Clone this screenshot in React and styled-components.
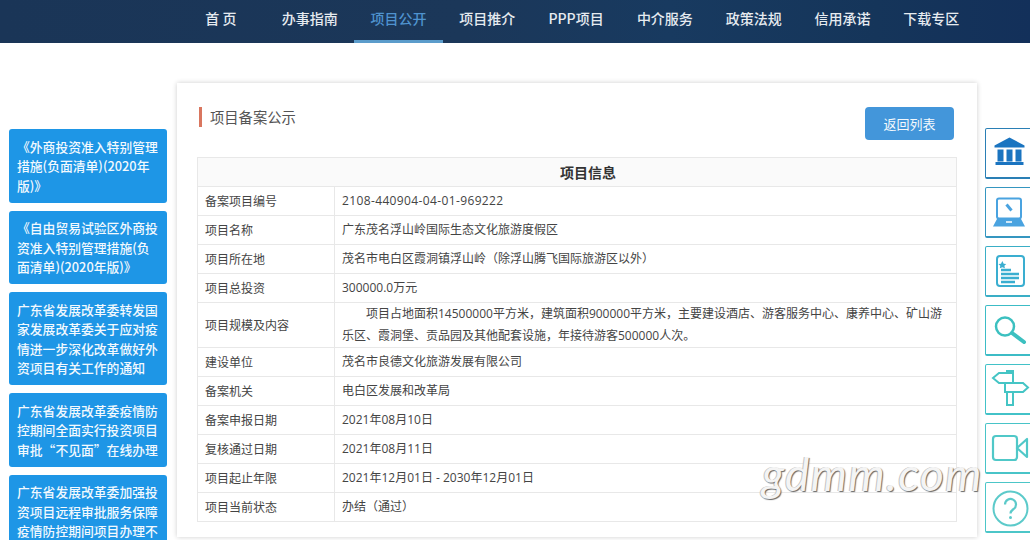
import React from "react";
import styled, { createGlobalStyle } from "styled-components";

const Global = createGlobalStyle`
  html, body { margin: 0; padding: 0; background: #fff; }
  body { font-family: "Open Sans", "Noto Sans CJK SC", sans-serif; font-size: 12px; color: #444; }
  * { box-sizing: border-box; }
`;

const Page = styled.div`
  position: relative;
  width: 1030px;
  height: 540px;
  overflow: hidden;
  background: #fff;
`;
const Header = styled.header`
  height: 43px;
  padding-left: 176.5px;
  background: linear-gradient(90deg, #1a3557 0%, #1b3759 45%, #183a60 65%, #15355a 85%, #13305a 100%);
`;
const Nav = styled.nav`
  display: flex;
`;
const NavItem = styled.a`
  width: 88.8px;
  height: 43px;
  line-height: 36px;
  text-align: center;
  font-family: "Noto Sans CJK SC", sans-serif;
  font-size: 14px;
  font-weight: 500;
  white-space: pre;
  color: ${(p) => (p.$active ? "#4f93cf" : "#e6ebf0")};
  border-bottom: 3px solid ${(p) => (p.$active ? "#5b9ccb" : "transparent")};
`;
const Body = styled.div`
  display: flex;
  align-items: flex-start;
  padding: 40px 0 0 9px;
`;
const Side = styled.aside`
  flex: none;
  width: 158px;
  margin: 46px 10px 0 0;
  display: flex;
  flex-direction: column;
  gap: 8px;
`;
const SideItem = styled.a`
  display: block;
  padding: 7.5px 7px 7.5px 8px;
  background: #1e96e6;
  border-radius: 3px;
  color: #f2f9fe;
  font-family: "Noto Sans CJK SC", sans-serif;
  font-size: 12.8px;
  font-weight: 500;
  line-height: 19.5px;
`;
const Card = styled.main`
  flex: none;
  width: 800px;
  height: 454px;
  padding: 24px 20px 0;
  background: #fff;
  box-shadow: 0 0 5px rgba(0, 0, 0, 0.2);
`;
const TitleRow = styled.div`
  display: flex;
  justify-content: space-between;
  align-items: flex-start;
  margin-bottom: 17px;
  padding-right: 3px;
`;
const Title = styled.h2`
  margin: 0 0 0 2px;
  height: 20px;
  padding-left: 8px;
  border-left: 3px solid #d9765f;
  font-size: 14.3px;
  font-weight: 400;
  line-height: 22px;
  color: #555;
`;
const BackButton = styled.button`
  width: 89px;
  height: 33px;
  border: 0;
  border-radius: 4px;
  background: #4396da;
  color: #f4f9fd;
  font: 400 13px "Open Sans", "Noto Sans CJK SC", sans-serif;
`;
const Table = styled.table`
  width: 760px;
  border-collapse: collapse;
  table-layout: fixed;
`;
const LabelCol = styled.col`
  width: 137px;
`;
const HeadCell = styled.th`
  height: 29px;
  padding: 0 0 1px 22px;
  border: 1px solid #e8e8e8;
  background: #fafafa;
  color: #333;
  font-size: 14px;
  font-weight: 700;
`;
const Label = styled.td`
  height: 29px;
  padding: 0 7px;
  border: 1px solid #e8e8e8;
  color: #444;
`;
const Value = styled.td`
  padding: 0 7px;
  border: 1px solid #e8e8e8;
  color: #444;
  line-height: 22px;
  text-indent: ${(p) => (p.$indent ? "24px" : "0")};
  letter-spacing: ${(p) => (p.$code ? "0.37px" : "normal")};
`;
const Dock = styled.aside`
  flex: none;
  width: 60px;
  margin: 45px 0 0 8px;
  display: flex;
  flex-direction: column;
  gap: 8px;
`;
const DockBox = styled.a`
  display: flex;
  align-items: center;
  height: 51px;
  padding-left: 7px;
  border: 1.5px solid ${(p) => p.$c};
  border-bottom-width: 2px;
  border-radius: 2px;
  color: ${(p) => p.$c2 || p.$c};
  background: #fff;
`;
const DockSvg = styled.svg`
  flex: none;
  overflow: visible;
`;
const Watermark = styled.div`
  position: absolute;
  left: 762px;
  top: 446px;
  font: italic 400 46px Lato, "Open Sans", sans-serif;
  letter-spacing: 1.4px;
  color: #f4f4f4;
  text-shadow: 1px 1px 1px #666, -1px 0 0 #c4c4c4;
  white-space: nowrap;
`;

const nav = ["首 页", "办事指南", "项目公开", "项目推介", "PPP项目", "中介服务", "政策法规", "信用承诺", "下载专区"];
const side = [
  "《外商投资准入特别管理措施(负面清单)(2020年版)》",
  "《自由贸易试验区外商投资准入特别管理措施(负面清单)(2020年版)》",
  "广东省发展改革委转发国家发展改革委关于应对疫情进一步深化改革做好外资项目有关工作的通知",
  "广东省发展改革委疫情防控期间全面实行投资项目审批“不见面”在线办理",
  "广东省发展改革委加强投资项目远程审批服务保障疫情防控期间项目办理不见面",
];
const rows = [
  { k: "备案项目编号", v: "2108-440904-04-01-969222", code: true },
  { k: "项目名称", v: "广东茂名浮山岭国际生态文化旅游度假区" },
  { k: "项目所在地", v: "茂名市电白区霞洞镇浮山岭（除浮山腾飞国际旅游区以外）" },
  { k: "项目总投资", v: "300000.0万元" },
  { k: "项目规模及内容", v: "项目占地面积14500000平方米，建筑面积900000平方米，主要建设酒店、游客服务中心、康养中心、矿山游乐区、霞洞堡、贡品园及其他配套设施，年接待游客500000人次。", indent: true },
  { k: "建设单位", v: "茂名市良德文化旅游发展有限公司" },
  { k: "备案机关", v: "电白区发展和改革局" },
  { k: "备案申报日期", v: "2021年08月10日" },
  { k: "复核通过日期", v: "2021年08月11日" },
  { k: "项目起止年限", v: "2021年12月01日 - 2030年12月01日" },
  { k: "项目当前状态", v: "办结（通过）" },
];

const Icon = ({ children }) => (
  <DockSvg width="36" height="36" viewBox="0 0 36 36" fill="none" stroke="currentColor">{children}</DockSvg>
);
const icons = [
  { c: "#2a7fb5", c2: "#1a74c0", svg: (
    <Icon>
      <path d="M16.500 2.500 L31.500 10.500 V12.500 H1.500 V10.500 Z" fill="currentColor" stroke="none" />
      <path d="M4.500 14.500h6v12h-6zM13.500 14.500h6v12h-6zM22.500 14.500h6v12h-6z" fill="currentColor" stroke="none" />
      <path d="M2.500 27h28v3h-28z" fill="currentColor" stroke="none" />
    </Icon>) },
  { c: "#3596c0", c2: "#4aa3e0", svg: (
    <Icon>
      <rect x="4" y="4.500" width="24" height="20" rx="2" strokeWidth="2" />
      <path d="M13.500 10.500 L18.500 16.500" strokeWidth="3" />
      <path d="M4 25 L0 32.500 H32 L28 25 Z" fill="currentColor" stroke="none" />
      <path d="M13 28h6" stroke="#fff" strokeWidth="1.500" />
    </Icon>) },
  { c: "#3aaec6", c2: "#3aaed0", svg: (
    <Icon>
      <rect x="4" y="3" width="27" height="30" rx="3" strokeWidth="2" />
      <path d="M11 6 l1.600 3 3 .3-2.200 2.200.6 3-3-1.400-3 1.400.6-3-2.200-2.200 3-.3z" fill="currentColor" stroke="none" transform="translate(0 3) scale(.85)" />
      <path d="M8 17h10M8 21h18M8 25h18M8 29h14" strokeWidth="2.500" />
    </Icon>) },
  { c: "#3cbcc6", c2: "#3cc0c0", svg: (
    <Icon>
      <circle cx="12" cy="14.500" r="9" strokeWidth="2.500" />
      <path d="M19 21 L31 30" strokeWidth="4" strokeLinecap="round" />
    </Icon>) },
  { c: "#42c2c8", c2: "#45c5c5", svg: (
    <Icon>
      <path d="M20 2H6L0 7l6 5h14z" strokeWidth="2" />
      <path d="M12 12h18l5 4.500-5 4.500H12z" strokeWidth="2" />
      <path d="M14 2V0h6v2M14 21v13h6V21" strokeWidth="2" />
    </Icon>) },
  { c: "#48c4c8", c2: "#50c8c8", svg: (
    <Icon>
      <rect x="0" y="6" width="24" height="24" rx="3" strokeWidth="2.200" />
      <path d="M24 18 L34 9 V27 Z" strokeWidth="2.200" strokeLinejoin="round" />
    </Icon>) },
  { c: "#4cc6c8", c2: "#5ccaca", svg: (
    <Icon>
      <circle cx="17.500" cy="19.500" r="17" strokeWidth="2" />
      <path d="M12 15.500 a5.500 5.500 0 1 1 8.500 4.600 c-2 1.400-3 2-3 4.400" strokeWidth="2.200" />
      <circle cx="17.500" cy="28.500" r="1.500" fill="currentColor" stroke="none" />
    </Icon>) },
];

export default function App() {
  return (
    <Page>
      <Global />
      <Header>
        <Nav>
          {nav.map((n, i) => (
            <NavItem key={n} $active={i === 2}>{n}</NavItem>
          ))}
        </Nav>
      </Header>
      <Body>
        <Side>
          {side.map((s) => (
            <SideItem key={s}>{s}</SideItem>
          ))}
        </Side>
        <Card>
          <TitleRow>
            <Title>项目备案公示</Title>
            <BackButton>返回列表</BackButton>
          </TitleRow>
          <Table>
            <colgroup>
              <LabelCol />
              <col />
            </colgroup>
            <thead>
              <tr>
                <HeadCell colSpan={2}>项目信息</HeadCell>
              </tr>
            </thead>
            <tbody>
              {rows.map((r) => (
                <tr key={r.k}>
                  <Label>{r.k}</Label>
                  <Value $indent={r.indent} $code={r.code}>{r.v}</Value>
                </tr>
              ))}
            </tbody>
          </Table>
        </Card>
        <Dock>
          {icons.map((ic, i) => (
            <DockBox key={i} $c={ic.c} $c2={ic.c2}>{ic.svg}</DockBox>
          ))}
        </Dock>
      </Body>
      <Watermark>gdmm.com</Watermark>
    </Page>
  );
}
